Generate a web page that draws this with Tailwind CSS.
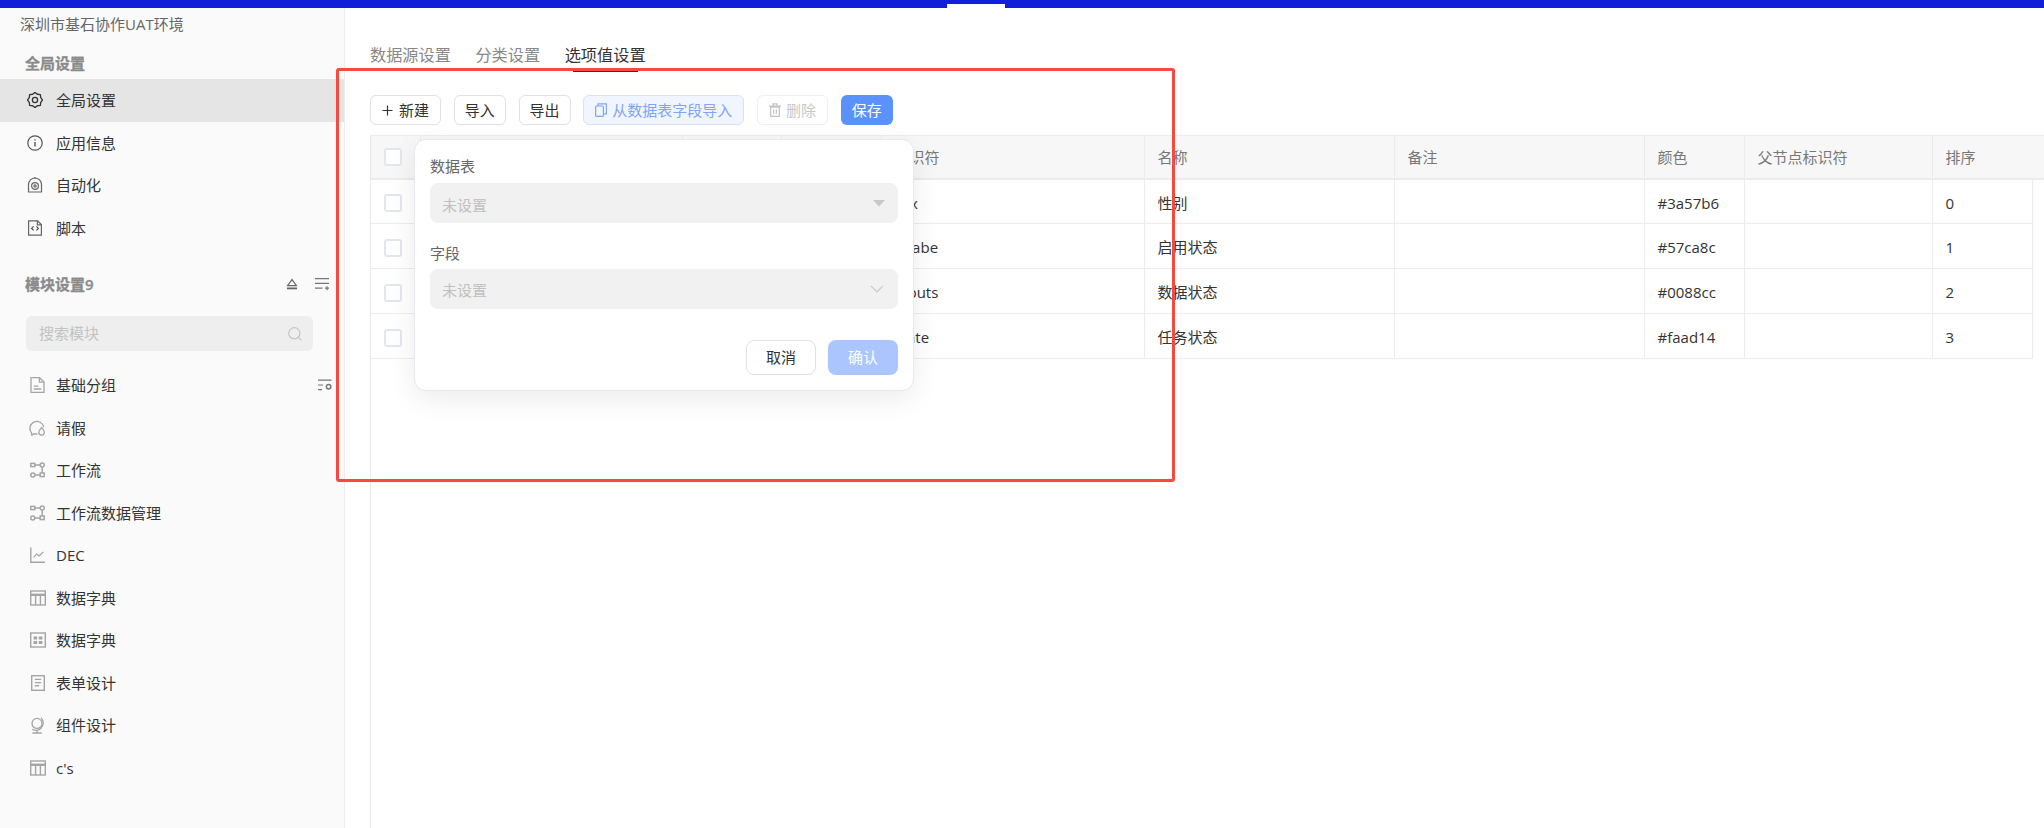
<!DOCTYPE html>
<html lang="zh-CN">
<head>
  <meta charset="UTF-8" />
  <title>选项值设置</title>
  <script src="https://cdn.jsdelivr.net/npm/@tailwindcss/browser@4"></script>
</head>
<body class="relative h-[828px] w-[2044px] overflow-hidden bg-white font-['Open_Sans','Noto_Sans_CJK_SC',sans-serif] text-[15px] text-[#333]">
  <!-- top bar -->
  <div class="relative h-2 bg-[#121fd9]">
    <div class="absolute left-[947px] top-1 h-1 w-[58px] bg-white"></div>
  </div>

  <div class="flex h-[820px]">
    <!-- sidebar -->
    <aside class="w-[345px] shrink-0 border-r border-[#eeeeee] bg-[#fafafa]">
      <div class="flex h-8 items-center pl-5 text-[#666]">深圳市基石协作UAT环境</div>
      <div class="mt-[7px] flex h-8 items-center pl-[25px] font-semibold text-[#8a8a8a] [-webkit-text-stroke:0.3px_#8a8a8a]">全局设置</div>

      <nav class="text-[#333]">
        <a class="flex h-[42.5px] items-center bg-[#e5e5e5] pl-[27px]">
          <svg class="mr-[13px] h-4 w-4" viewBox="0 0 16 16" fill="none" stroke="#333" stroke-width="1.3"><path d="M8 .4 10.370 2.270 13.370 2.630 13.730 5.630 15.600 8 13.730 10.370 13.370 13.370 10.370 13.730 8 15.600 5.630 13.730 2.630 13.370 2.270 10.370 .4 8 2.270 5.630 2.630 2.630 5.630 2.270Z" stroke-linejoin="round"/><circle cx="8" cy="8" r="2.6"/></svg>
          全局设置
        </a>
        <a class="flex h-[42.5px] items-center pl-[27px]">
          <svg class="mr-[13px] h-4 w-4" viewBox="0 0 16 16" fill="none" stroke="#555" stroke-width="1.2"><circle cx="8" cy="8" r="7.2"/><path d="M8 7v4.600M8 4.200v1.300" stroke-width="1.400"/></svg>
          应用信息
        </a>
        <a class="flex h-[42.5px] items-center pl-[27px]">
          <svg class="mr-[13px] h-4 w-4" viewBox="0 0 16 16" fill="none" stroke="#666" stroke-width="1.2"><path d="M1.500 15V7.500a6.500 6.500 0 0 1 13 0V15Z"/><circle cx="8" cy="9" r="3.400"/><circle cx="8" cy="9" r="1.100"/><path d="M8 .2v1.400" stroke-width="1.600"/></svg>
          自动化
        </a>
        <a class="flex h-[42.5px] items-center pl-[27px]">
          <svg class="mr-[13px] h-4 w-4" viewBox="0 0 16 16" fill="none" stroke="#666" stroke-width="1.2"><path d="M1.600 .8h9l3.800 3.800v10.600H1.600Z"/><path d="M10.400 .8v4h4"/><path d="M6.600 6.400 4.600 8.400l2 2M9.400 6.400l2 2-2 2" stroke-width="1.100" stroke="#444"/></svg>
          脚本
        </a>
      </nav>

      <div class="mt-[19px] flex h-8 items-center pl-[25px] pr-[15px] font-semibold text-[#8a8a8a]">
        <span class="grow [-webkit-text-stroke:0.3px_#8a8a8a]">模块设置9</span>
        <svg class="mr-4 h-3.5 w-3.5" viewBox="0 0 14 14" fill="none" stroke="#666" stroke-width="1.2"><path d="M7 2.600 11.400 8.600H2.600Z"/><path d="M2 11.400h10" stroke-width="1.800"/></svg>
        <svg class="h-3.5 w-3.5" viewBox="0 0 14 14" fill="none" stroke="#777" stroke-width="1.2"><path d="M0 1.600h14M0 6.400h14M0 11.200h7.500M10 11.200h4M12 9.200v4"/></svg>
      </div>

      <div class="ml-[26px] mt-4 flex h-[35px] w-[287px] items-center justify-between rounded-md bg-[#eeeeee] pl-[13px] pr-[11px] text-[#c2c2c2]">
        搜索模块
        <svg class="h-[14px] w-[14px]" viewBox="0 0 14 14" fill="none" stroke="#c4c4c4" stroke-width="1.2"><circle cx="6.300" cy="6.300" r="5.600"/><path d="m10.400 10.400 3 3"/></svg>
      </div>

      <nav class="mt-[13px] text-[#333]">
        <a class="relative flex h-[42.5px] items-center pl-[30px]">
          <svg class="mr-[11px] h-4 w-[15px]" viewBox="0 0 15 16" fill="none" stroke="#a5a5a5" stroke-width="1.3"><path d="M1 .7h8.600L14 5v10.300H1Z"/><path d="M9.400 .7v4.500H14M3.800 9.200h4.600M3.800 12h7.400" /></svg>
          基础分组
          <svg class="absolute left-[318px] top-[15px] h-3 w-[14px]" viewBox="0 0 14 12" fill="none" stroke="#777" stroke-width="1.2"><path d="M0 1.200h13.500M0 6h5M0 10.600h4"/><circle cx="10.600" cy="7.800" r="2.200" stroke-width="1.500"/></svg>
        </a>
        <a class="flex h-[42.5px] items-center pl-[29px]">
          <svg class="mr-[10px] h-4 w-[17px]" viewBox="0 0 17 16" fill="none" stroke="#a5a5a5" stroke-width="1.3"><path d="M8.400 14H4.500L2.800 15.400 2.600 13A7 7 0 1 1 14.800 7.200"/><path d="M12.600 7.600c1.600 2 2.800 3.200 2.800 4.700a2.800 2.800 0 0 1-5.600 0c0-1.500 1.200-2.700 2.800-4.700Z"/></svg>
          请假
        </a>
        <a class="flex h-[42.5px] items-center pl-[30px]">
          <svg class="mr-[11px] h-4 w-[15px]" viewBox="0 0 15 16" fill="none" stroke="#a5a5a5" stroke-width="1.5"><rect x=".8" y="1.400" width="4" height="3.200"/><circle cx="12.200" cy="3" r="2"/><circle cx="2.800" cy="13" r="2"/><rect x="10.200" y="11" width="4" height="3.600"/><path d="M4.800 3h5.400M12.200 5v6M4.800 13h5.400"/></svg>
          工作流
        </a>
        <a class="flex h-[42.5px] items-center pl-[30px]">
          <svg class="mr-[11px] h-4 w-[15px]" viewBox="0 0 15 16" fill="none" stroke="#a5a5a5" stroke-width="1.5"><rect x=".8" y="1.400" width="4" height="3.200"/><circle cx="12.200" cy="3" r="2"/><circle cx="2.800" cy="13" r="2"/><rect x="10.200" y="11" width="4" height="3.600"/><path d="M4.800 3h5.400M12.200 5v6M4.800 13h5.400"/></svg>
          工作流数据管理
        </a>
        <a class="flex h-[42.5px] items-center pl-[30px]">
          <svg class="mr-[11px] h-4 w-[15px]" viewBox="0 0 15 16" fill="none" stroke="#a5a5a5" stroke-width="1.4"><path d="M.8.4v14.800H15"/><path d="m3.600 10.400 3-3.400 2.400 2 4.400-4" stroke-width="1.200"/></svg>
          DEC
        </a>
        <a class="flex h-[42.5px] items-center pl-[30px]">
          <svg class="mr-[10px] h-4 w-4" viewBox="0 0 16 16" fill="none" stroke="#a5a5a5" stroke-width="1.4"><rect x=".7" y="1" width="14.600" height="14"/><path d="M.6 4.800h14.800" stroke-width="2.400"/><path d="M5.600 5v10M10.400 5v10"/></svg>
          数据字典
        </a>
        <a class="flex h-[42.5px] items-center pl-[30px]">
          <svg class="mr-[10px] h-4 w-4" viewBox="0 0 16 16" fill="none" stroke="#a5a5a5" stroke-width="1.4"><rect x=".7" y="1" width="14.600" height="14"/><path d="M3.600 4.400h3.600v3H3.600ZM8.800 4.400h3.600v3H8.800ZM3.600 9h3.600v3H3.600ZM8.800 9h3.600v3H8.800Z" fill="#a5a5a5" stroke="none"/></svg>
          数据字典
        </a>
        <a class="flex h-[42.5px] items-center pl-[31px]">
          <svg class="mr-[11px] h-4 w-[14px]" viewBox="0 0 14 16" fill="none" stroke="#a5a5a5" stroke-width="1.4"><rect x=".7" y=".7" width="12.600" height="14.600"/><path d="M3.800 4.400h6.400M3.800 7.600h6.400M3.800 10.800h4.200"/></svg>
          表单设计
        </a>
        <a class="flex h-[42.5px] items-center pl-[30px]">
          <svg class="mr-[11px] h-[17px] w-[15px]" viewBox="0 0 15 17" fill="none" stroke="#a5a5a5" stroke-width="1.3"><circle cx="7" cy="6.400" r="5"/><path d="M11 .6a7.400 7.400 0 0 1-.2 10.800 7.400 7.400 0 0 1-8.600.8M7 13.800v2M2.400 16h9.400"/></svg>
          组件设计
        </a>
        <a class="flex h-[42.5px] items-center pl-[30px]">
          <svg class="mr-[10px] h-4 w-4" viewBox="0 0 16 16" fill="none" stroke="#a5a5a5" stroke-width="1.4"><rect x=".7" y="1" width="14.600" height="14"/><path d="M.6 4.800h14.800" stroke-width="2.400"/><path d="M5.600 5v10M10.400 5v10"/></svg>
          c's
        </a>
      </nav>
    </aside>

    <!-- main -->
    <main class="min-w-0 grow pl-[25px]">
      <div class="flex h-[60px] items-end gap-[24.500px] text-[16.200px] text-[#888]">
        <span class="pb-px">数据源设置</span>
        <span class="pb-px">分类设置</span>
        <span class="relative pb-px text-[#333]">选项值设置<i class="absolute bottom-[-4px] left-[8px] h-0.5 w-[65px] bg-[#333]"></i></span>
      </div>

      <div class="mt-[27px] flex h-[30px] gap-[12.750px]">
        <button class="flex w-[71px] items-center justify-center gap-[6px] rounded-md border border-[#dfe1e8]"><svg class="h-[11px] w-[11px]" viewBox="0 0 11 11" stroke="#333" stroke-width="1.200"><path d="M5.500 .5v10M.5 5.500h10"/></svg>新建</button>
        <button class="w-[52px] rounded-md border border-[#dfe1e8]">导入</button>
        <button class="w-[52px] rounded-md border border-[#dfe1e8]">导出</button>
        <button class="flex w-[161px] items-center justify-center gap-[5px] rounded-md border border-[#d6e2fb] bg-[#f0f5ff] text-[#7fa6f6]"><svg class="h-[14px] w-[12px]" viewBox="0 0 12 14" fill="none" stroke="#7fa6f6" stroke-width="1.200"><rect x=".6" y="3" width="7.800" height="10.400" rx="1"/><path d="M3 3V.8h8.400v10H8.400"/></svg>从数据表字段导入</button>
        <button class="flex w-[71px] items-center justify-center gap-[5px] rounded-md border border-[#eceef3] text-[#c8c8c8]"><svg class="h-[14px] w-[12px]" viewBox="0 0 12 14" fill="none" stroke="#c4c4c4" stroke-width="1.300"><path d="M1.600 4h8.800v9.400H1.600ZM0 3.200h12M4 3V.8h4V3M4.600 6.400v4.400M7.400 6.400v4.400"/></svg>删除</button>
        <button class="w-[52px] rounded-md bg-[#5b91fb] text-white">保存</button>
      </div>

      <!-- table -->
      <div class="mt-2.5 h-[693px] border-l border-[#e8e8e8]">
        <table class="w-[1661px] table-fixed border-collapse">
          <colgroup>
            <col class="w-[49px]" /><col class="w-[262px]" /><col class="w-[99px]" /><col class="w-[100px]" /><col class="w-[263px]" /><col class="w-[250px]" /><col class="w-[250px]" /><col class="w-[100px]" /><col class="w-[188px]" /><col class="w-[100px]" />
          </colgroup>
          <thead class="bg-[#f7f7f7] text-left font-normal text-[#777] [&_th]:pt-px">
            <tr class="h-[43px] border-t border-b-2 border-[#ececec]">
              <th class="border-r border-[#ececec] pl-[13px] font-normal"><span class="block h-[18px] w-[18px] rounded-[3px] border-2 border-[#e3e6ee] bg-white"></span></th>
              <th class="border-r border-[#ececec] font-normal"></th>
              <th class="border-r border-[#ececec] font-normal"></th>
              <th class="border-r border-[#ececec] font-normal"></th>
              <th class="border-r border-[#ececec] pl-[13px] font-normal">标识符</th>
              <th class="border-r border-[#ececec] pl-[13px] font-normal">名称</th>
              <th class="border-r border-[#ececec] pl-[13px] font-normal">备注</th>
              <th class="border-r border-[#ececec] pl-[13px] font-normal">颜色</th>
              <th class="border-r border-[#ececec] pl-[13px] font-normal">父节点标识符</th>
              <th class="border-r border-[#ececec] pl-[13px] font-normal">排序</th>
            </tr>
          </thead>
          <tbody class="[&_td]:pt-[3px]">
            <tr class="h-[45px] border-b border-[#ececec]">
              <td class="border-r border-[#ececec] pl-[13px]"><span class="block h-[18px] w-[18px] rounded-[3px] border-2 border-[#e3e6ee]"></span></td>
              <td class="border-r border-[#ececec]"></td><td class="border-r border-[#ececec]"></td><td class="border-r border-[#ececec]"></td>
              <td class="border-r border-[#ececec] pl-[13px]">sex</td>
              <td class="border-r border-[#ececec] pl-[13px]">性别</td>
              <td class="border-r border-[#ececec]"></td>
              <td class="border-r border-[#ececec] pl-[13px]">#3a57b6</td>
              <td class="border-r border-[#ececec]"></td>
              <td class="border-r border-[#ececec] pl-[13px]">0</td>
            </tr>
            <tr class="h-[45px] border-b border-[#ececec]">
              <td class="border-r border-[#ececec] pl-[13px]"><span class="block h-[18px] w-[18px] rounded-[3px] border-2 border-[#e3e6ee]"></span></td>
              <td class="border-r border-[#ececec]"></td><td class="border-r border-[#ececec]"></td><td class="border-r border-[#ececec]"></td>
              <td class="border-r border-[#ececec] pl-[13px]">enabe</td>
              <td class="border-r border-[#ececec] pl-[13px]">启用状态</td>
              <td class="border-r border-[#ececec]"></td>
              <td class="border-r border-[#ececec] pl-[13px]">#57ca8c</td>
              <td class="border-r border-[#ececec]"></td>
              <td class="border-r border-[#ececec] pl-[13px]">1</td>
            </tr>
            <tr class="h-[45px] border-b border-[#ececec]">
              <td class="border-r border-[#ececec] pl-[13px]"><span class="block h-[18px] w-[18px] rounded-[3px] border-2 border-[#e3e6ee]"></span></td>
              <td class="border-r border-[#ececec]"></td><td class="border-r border-[#ececec]"></td><td class="border-r border-[#ececec]"></td>
              <td class="border-r border-[#ececec] pl-[13px]">inputs</td>
              <td class="border-r border-[#ececec] pl-[13px]">数据状态</td>
              <td class="border-r border-[#ececec]"></td>
              <td class="border-r border-[#ececec] pl-[13px]">#0088cc</td>
              <td class="border-r border-[#ececec]"></td>
              <td class="border-r border-[#ececec] pl-[13px]">2</td>
            </tr>
            <tr class="h-[45px] border-b border-[#ececec]">
              <td class="border-r border-[#ececec] pl-[13px]"><span class="block h-[18px] w-[18px] rounded-[3px] border-2 border-[#e3e6ee]"></span></td>
              <td class="border-r border-[#ececec]"></td><td class="border-r border-[#ececec]"></td><td class="border-r border-[#ececec]"></td>
              <td class="border-r border-[#ececec] pl-[13px]">state</td>
              <td class="border-r border-[#ececec] pl-[13px]">任务状态</td>
              <td class="border-r border-[#ececec]"></td>
              <td class="border-r border-[#ececec] pl-[13px]">#faad14</td>
              <td class="border-r border-[#ececec]"></td>
              <td class="border-r border-[#ececec] pl-[13px]">3</td>
            </tr>
          </tbody>
        </table>
      </div>
    </main>
  </div>

  <!-- header bg past the last column -->
  <div class="absolute left-[2032px] top-[135px] h-[45px] w-3 border-t border-b-2 border-[#ececec] bg-[#f7f7f7]"></div>

  <!-- popover -->
  <div class="absolute left-[414px] top-[139px] h-[252px] w-[500px] rounded-xl border border-[#e6e8ee] bg-white px-[15px] shadow-[0_8px_28px_rgba(0,0,0,0.08)]">
    <div class="mt-[15px] text-[#666]">数据表</div>
    <div class="mt-[5px] flex h-10 items-center justify-between rounded-lg bg-[#f1f1f1] pl-3 pr-[13px] text-[#c0c0c0]">
      <span class="pt-1.5">未设置</span>
      <svg class="h-2 w-3" viewBox="0 0 12 8" fill="#c8c8c8"><path d="M0 1h12L6 7.500Z"/></svg>
    </div>
    <div class="mt-[19px] text-[#666]">字段</div>
    <div class="mt-[5px] flex h-10 items-center justify-between rounded-lg bg-[#f1f1f1] pl-3 pr-[14px] text-[#c0c0c0]">
      <span class="pt-0.5">未设置</span>
      <svg class="h-2 w-[14px]" viewBox="0 0 14 8" fill="none" stroke="#c8c8c8" stroke-width="1.200"><path d="m1 .8 6 6 6-6"/></svg>
    </div>
    <div class="mt-[31px] flex justify-end gap-3">
      <button class="h-[35px] w-[70px] rounded-lg border border-[#dfe1e8] text-[#333]">取消</button>
      <button class="h-[35px] w-[70px] rounded-lg bg-[#abc6ff] text-white">确认</button>
    </div>
  </div>

  <!-- red annotation frame -->
  <div class="pointer-events-none absolute left-[336px] top-[68px] h-[414px] w-[839px] rounded-[3px] border-[3px] border-[#f44a3f]"></div>
</body>
</html>
